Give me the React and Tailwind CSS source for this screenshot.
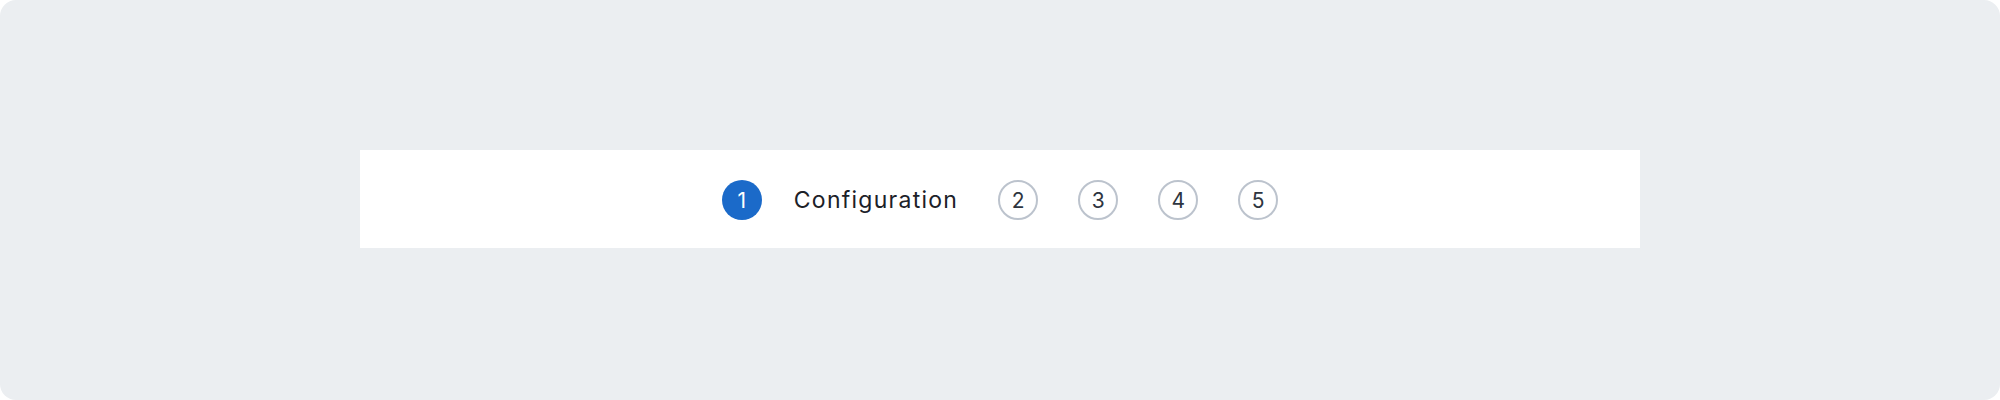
const steps = [
    { n: 1, label: "Configuration", active: true },
    { n: 2 },
    { n: 3 },
    { n: 4 },
    { n: 5 },
];

const StepCircle = ({ n, active }) => {
    return (
        <div
            className={
                active
                    ? "w-10 h-10 rounded-full bg-[#1b6ac9] text-white flex items-center justify-center text-[21px] leading-none"
                    : "w-10 h-10 rounded-full border-2 border-[#bcc3cd] text-[#2e3540] flex items-center justify-center text-[21px] leading-none"
            }
        >
            {n}
        </div>
    );
};

const App = () => {
    return (
        <div className="bg-white w-[2000px] h-[400px] font-['Inter',sans-serif]">
            <div className="h-full rounded-[16px] bg-[#ebeef1] flex justify-center pt-[150px]">
                <div className="w-[1280px] h-[98px] pt-[2px] bg-white flex items-center justify-center gap-10">
                    {steps.map((step) => (
                        <div key={step.n} className="flex items-center gap-8">
                            <StepCircle n={step.n} active={step.active} />
                            {step.label && (
                                <span className="text-[23px] tracking-[0.055em] text-[#1c2128]">
                                    {step.label}
                                </span>
                            )}
                        </div>
                    ))}
                </div>
            </div>
        </div>
    );
};

export default App;
